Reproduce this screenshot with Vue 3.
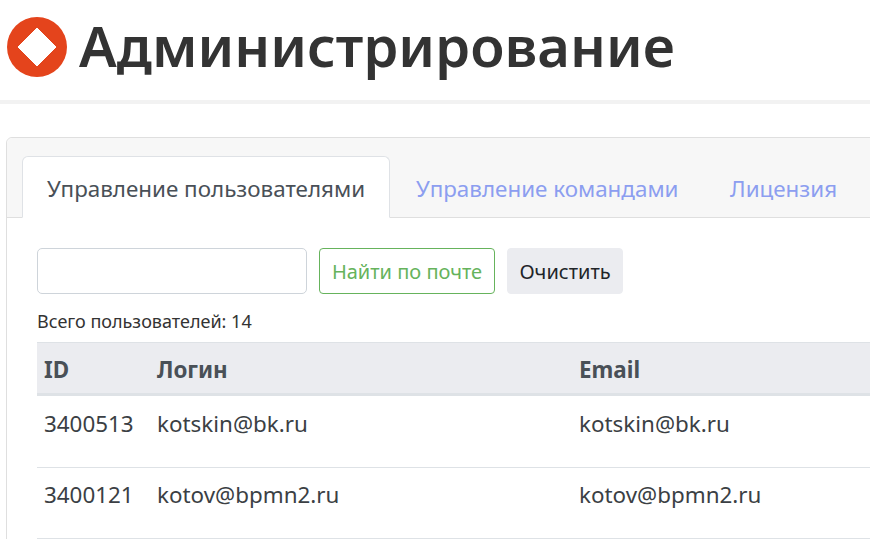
<script setup>
const rows = [
  { id: '3400513', login: 'kotskin@bk.ru', email: 'kotskin@bk.ru' },
  { id: '3400121', login: 'kotov@bpmn2.ru', email: 'kotov@bpmn2.ru' },
]
</script>

<template>
  <div class="page">
    <header class="header">
      <svg class="logo" width="60" height="60" viewBox="0 0 60 60">
        <circle cx="30" cy="30" r="30" fill="#e4441c" />
        <path d="M30 11 L49 30 L30 49 L11 30 Z" fill="#fff" stroke="#fff" stroke-width="1" stroke-linejoin="round" />
      </svg>
      <h1 class="title">Администрирование</h1>
    </header>
    <section class="card">
      <nav class="tabs">
        <a class="tab active">Управление пользователями</a>
        <a class="tab">Управление командами</a>
        <a class="tab">Лицензия</a>
      </nav>
      <div class="body">
        <form class="search" @submit.prevent>
          <input class="input" type="text" />
          <button class="btn find" type="button">Найти по почте</button>
          <button class="btn clear" type="button">Очистить</button>
        </form>
        <div class="total">Всего пользователей: 14</div>
        <div class="table">
          <div class="row head">
            <div class="c-id">ID</div>
            <div class="c-login">Логин</div>
            <div class="c-email">Email</div>
          </div>
          <div v-for="r in rows" :key="r.id" class="row item">
            <div class="c-id">{{ r.id }}</div>
            <div class="c-login">{{ r.login }}</div>
            <div class="c-email">{{ r.email }}</div>
          </div>
        </div>
      </div>
    </section>
  </div>
</template>

<style>
html, body { margin: 0; overflow: hidden; background: #fff; }
</style>

<style scoped>
.page {
  width: 870px;
  height: 539px;
  overflow: hidden;
  font-family: "Noto Sans", "Open Sans", sans-serif;
  color: #333;
}
.header {
  border-bottom: 4px solid #f2f2f2;
  display: flex;
  align-items: flex-start;
  padding: 17px 0 0 7px;
  box-sizing: content-box;
  height: 83px;
}
.logo { flex: none; }
.title {
  margin: -4px 0 0 12px;
  font-size: 56.2px;
  line-height: 64px;
  font-weight: 600;
  color: #333;
  white-space: nowrap;
}
.card {
  margin: 33px 0 0 6px;
  width: 1000px;
  min-height: 600px;
  border: 1px solid #dfdfdf;
  border-radius: 6px;
  background: #fff;
}
.tabs {
  display: flex;
  height: 80px;
  box-sizing: border-box;
  padding: 18px 0 0 15px;
  background: #f7f7f7;
  border-bottom: 1px solid #dfdfdf;
  border-radius: 6px 6px 0 0;
  font-size: 22.4px;
}
.tab {
  height: 62px;
  box-sizing: border-box;
  padding: 0 24.5px 0 25px;
  line-height: 64px;
  color: #8c9ef0;
  border: 1px solid transparent;
  white-space: nowrap;
}
.tab.active {
  padding: 0 24px;
  background: #fff;
  color: #495057;
  border-color: #dfe2e6 #dfe2e6 #fff;
  border-radius: 6px 6px 0 0;
}
.body { padding: 30px 30px 0; }
.search { display: flex; align-items: center; }
.input {
  width: 270px;
  height: 46px;
  box-sizing: border-box;
  border: 1px solid #ced4da;
  border-radius: 5px;
  background: #fff;
  margin: 0 12px 0 0;
}
.btn {
  height: 46px;
  box-sizing: border-box;
  border-radius: 4px;
  font-family: inherit;
  font-size: 20px;
  padding: 0;
  background: #fff;
  white-space: nowrap;
}
.find {
  border: 1px solid #66b35c;
  color: #66b35c;
  width: 176px;
  margin-right: 12px;
}
.clear {
  border: 1px solid #ebecf0;
  background: #ebecf0;
  color: #212529;
  width: 116px;
}
.total {
  margin-top: 16px;
  height: 32px;
  font-size: 18px;
  line-height: 22px;
  color: #333;
}
.table { width: 1000px; }
.row { display: flex; }
.c-id { width: 120px; padding-left: 7px; box-sizing: border-box; }
.c-login { width: 422px; }
.head {
  height: 54px;
  box-sizing: border-box;
  background: #ebecf0;
  border-top: 1px solid #dee2e6;
  border-bottom: 3px solid #dee2e6;
  font-size: 22.4px;
  font-weight: 700;
  line-height: 53px;
  color: #495057;
}
.item {
  height: 71.6px;
  box-sizing: border-box;
  border-bottom: 1px solid #dee2e6;
  font-size: 22.4px;
  line-height: 56px;
  color: #3b3f44;
}
.item + .item { line-height: 54.6px; }
</style>
